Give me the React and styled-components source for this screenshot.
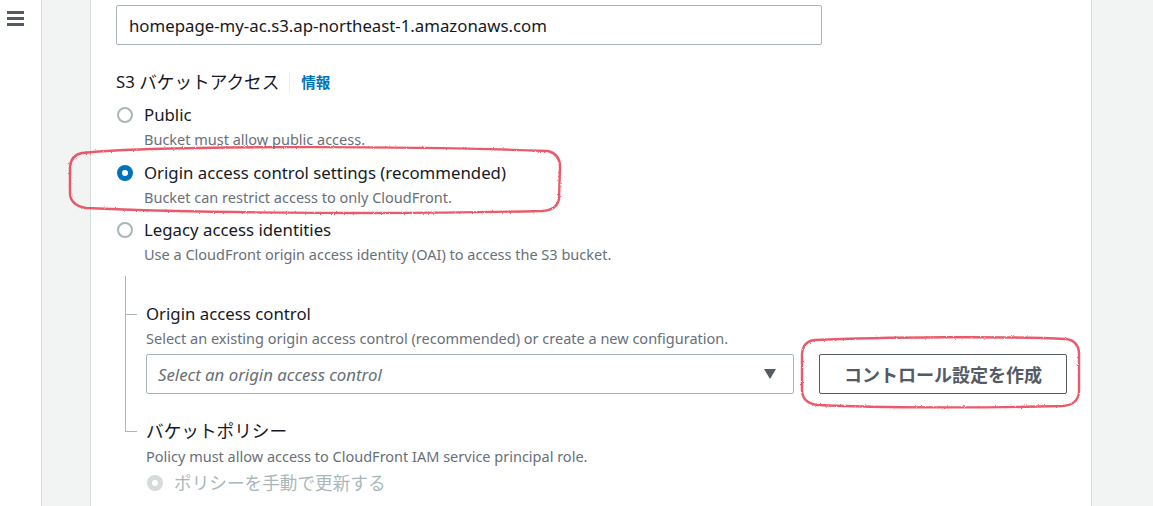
import React from 'react'
import styled, { createGlobalStyle } from 'styled-components'

const Global = createGlobalStyle`
html, body {
  margin: 0;
  padding: 0;
  background: #f2f3f3;
  overflow: hidden;
}
* { box-sizing: border-box; }
`

const FONT = `"Noto Sans", "Noto Sans CJK JP", sans-serif`

const options = [
  { id: 'public', label: 'Public', desc: 'Bucket must allow public access.', checked: false },
  { id: 'oac', label: 'Origin access control settings (recommended)', desc: 'Bucket can restrict access to only CloudFront.', checked: true },
  { id: 'legacy', label: 'Legacy access identities', desc: 'Use a CloudFront origin access identity (OAI) to access the S3 bucket.', checked: false },
]

const App = () => {
  return (
    <Page>
      <Global />
      <Sidebar>
        <Burger>
          <span /><span /><span />
        </Burger>
      </Sidebar>
      <Gutter />
      <Panel>
        <TextInput value="homepage-my-ac.s3.ap-northeast-1.amazonaws.com" readOnly />
        <FieldLabel>
          S3 <Ja>バケットアクセス</Ja>
          <Divider />
          <InfoLink>情報</InfoLink>
        </FieldLabel>
        <RadioGroup>
          {options.map((o) => (
            <Option key={o.id}>
              <RadioRow>
                <Radio checked={o.checked} />
                <OptionLabel>{o.label}</OptionLabel>
              </RadioRow>
              <OptionDesc>{o.desc}</OptionDesc>
            </Option>
          ))}
        </RadioGroup>
        <Tree>
          <TreeItem first>
            <SubLabel>Origin access control</SubLabel>
            <SubDesc>Select an existing origin access control (recommended) or create a new configuration.</SubDesc>
            <SelectRow>
              <Select>
                <Placeholder>Select an origin access control</Placeholder>
                <Caret viewBox="0 0 14 12">
                  <path d="M1 1 L13 1 L7 11 Z" fill="#545b64" />
                </Caret>
              </Select>
              <Button>コントロール設定を作成</Button>
            </SelectRow>
          </TreeItem>
          <TreeItem last>
            <SubLabel><Ja>バケットポリシー</Ja></SubLabel>
            <SubDesc>Policy must allow access to CloudFront IAM service principal role.</SubDesc>
            <PolicyRow>
              <Radio disabled />
              <OptionLabel muted><Ja>ポリシーを手動で更新する</Ja></OptionLabel>
            </PolicyRow>
          </TreeItem>
        </Tree>
      </Panel>
      <RightGutter />
      <Marks width="1153" height="506" viewBox="0 0 1153 506">
        <defs>
          <filter id="rough" x="-5%" y="-20%" width="110%" height="140%">
            <feTurbulence type="fractalNoise" baseFrequency="0.9" numOctaves="2" seed="3" />
            <feDisplacementMap in="SourceGraphic" scale="2.2" />
          </filter>
        </defs>
        <g fill="none" stroke="rgba(226,30,48,0.72)" strokeWidth="2.4" strokeLinejoin="round" filter="url(#rough)">
          <path d="M82 153 C 160 145, 420 146, 548 151 Q 560 154 560 167 L 559 199 Q 557 210 542 211 C 420 214, 220 214, 86 208 Q 70 205 70 193 L 70 167 Q 71 155 82 153 Z" />
          <path d="M815 340 C 880 337, 1010 336, 1066 339 Q 1079 341 1079 354 L 1079 392 Q 1078 405 1062 406 C 990 408, 880 408, 818 405 Q 802 403 802 390 L 802 354 Q 803 341 815 340 Z" />
        </g>
      </Marks>
    </Page>
  )
}

export default App

const Page = styled.div`
position: relative;
display: flex;
width: 1153px;
height: 506px;
overflow: hidden;
font-family: ${FONT};
color: #16191f;
background: #f2f3f3;
`
const Sidebar = styled.div`
width: 42px;
flex-shrink: 0;
background: #fff;
border-right: 1px solid #d5dbdb;
padding: 11px 0 0 7px;
`
const Burger = styled.div`
display: flex;
flex-direction: column;
gap: 3.5px;
width: 17px;
span{
  display: block;
  height: 2.5px;
  background: #545b64;
}
`
const Gutter = styled.div`
width: 48px;
flex-shrink: 0;
background: #f2f3f3;
`
const RightGutter = styled.div`
flex: 1;
background: #f2f3f3;
`
const Panel = styled.div`
width: 1002px;
flex-shrink: 0;
background: #fff;
border-left: 1px solid #d5dbdb;
border-right: 1px solid #d5dbdb;
padding: 5px 0 0 25px;
`
const Ja = styled.span`
font-size: 1.05em;
`
const TextInput = styled.input`
display: block;
width: 706px;
height: 40px;
border: 1px solid #aab7b8;
border-radius: 2px;
padding: 0 12px;
font-family: ${FONT};
font-size: 16.8px;
color: #16191f;
outline: none;
`
const FieldLabel = styled.div`
display: flex;
align-items: center;
margin-top: 25px;
height: 24px;
font-size: 16.8px;
line-height: 24px;
white-space: pre;
`
const Divider = styled.span`
width: 1px;
height: 20px;
background: #eaeded;
margin: 0 11px 0 10px;
`
const InfoLink = styled.span`
color: #0073bb;
font-weight: bold;
font-size: 14.5px;
`
const RadioGroup = styled.div`
display: flex;
flex-direction: column;
gap: 10.5px;
margin-top: 9px;
`
const Option = styled.div`
display: flex;
flex-direction: column;
`
const RadioRow = styled.div`
display: flex;
align-items: center;
height: 24px;
`
const PolicyRow = styled(RadioRow)`
margin-top: 5px;
`
const Radio = styled.span`
width: 16px;
height: 16px;
border-radius: 50%;
margin: 0 11px 0 1px;
flex-shrink: 0;
background: #fff;
border: ${({ checked, disabled }) => (checked ? '5px solid #0073bb' : disabled ? '5px solid #d5dbdb' : '2px solid #aab7b8')};
`
const OptionLabel = styled.span`
font-size: 16.8px;
line-height: 24px;
color: ${({ muted }) => (muted ? '#aab7b8' : '#16191f')};
`
const OptionDesc = styled.div`
padding-left: 28px;
margin-top: 1px;
font-size: 14.5px;
line-height: 22px;
color: #687078;
`
const Tree = styled.div`
margin: 11px 0 0 9px;
`
const TreeItem = styled.div`
position: relative;
padding: ${({ first }) => (first ? '26px' : '25px')} 0 0 21px;
&::before{
  content: "";
  position: absolute;
  left: 0;
  top: 0;
  width: 1px;
  background: #aab7b8;
  height: ${({ last }) => (last ? '38px' : '100%')};
}
&::after{
  content: "";
  position: absolute;
  left: 0;
  top: ${({ first }) => (first ? '38px' : '37px')};
  width: 12px;
  height: 1px;
  background: #aab7b8;
}
`
const SubLabel = styled.div`
font-size: 16.8px;
line-height: 24px;
`
const SubDesc = styled.div`
margin-top: 2px;
font-size: 14.5px;
line-height: 20px;
color: #687078;
`
const SelectRow = styled.div`
display: flex;
align-items: center;
gap: 25px;
margin-top: 6px;
`
const Select = styled.div`
display: flex;
align-items: center;
justify-content: space-between;
width: 648px;
height: 40px;
border: 1px solid #aab7b8;
border-radius: 2px;
padding: 0 16px 0 11px;
`
const Placeholder = styled.span`
font-style: italic;
font-size: 16.8px;
color: #687078;
`
const Caret = styled.svg`
width: 14px;
height: 12px;
`
const Button = styled.div`
width: 248px;
height: 40px;
border: 1px solid #545b64;
border-radius: 2px;
display: flex;
justify-content: center;
align-items: center;
font-size: 18px;
font-weight: bold;
color: #545b64;
`
const Marks = styled.svg`
position: absolute;
left: 0;
top: 0;
pointer-events: none;
`
